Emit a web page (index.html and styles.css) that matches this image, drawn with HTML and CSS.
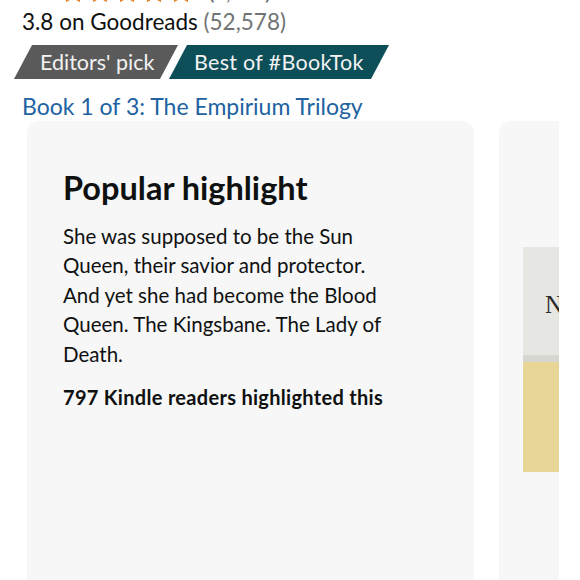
FILE: index.html
```html
<!DOCTYPE html>
<html lang="en">
<head>
<meta charset="utf-8">
<title>Book details</title>
<link rel="stylesheet" href="styles.css">
</head>
<body>
<div class="page">
  <div class="rating-row">
    <svg class="stars" width="132" height="24" viewBox="0 0 132 24" aria-hidden="true">
      <defs>
        <path id="star" d="M12 1.5l3.1 6.9 7.4.7-5.6 5 1.7 7.4L12 17.6l-6.6 3.9 1.7-7.4-5.6-5 7.4-.7z"/>
      </defs>
      <use href="#star" x="0" class="st"/>
      <use href="#star" x="27" class="st"/>
      <use href="#star" x="54" class="st"/>
      <use href="#star" x="81" class="st"/>
      <use href="#star" x="108" class="st"/>
    </svg>
    <span class="count">(4,190)</span>
  </div>
  <div class="goodreads">3.8 on Goodreads <span class="muted">(52,578)</span></div>
  <div class="tags">
    <span class="tag tag-gray">Editors' pick</span>
    <span class="tag tag-teal">Best of #BookTok</span>
  </div>
  <a class="series" href="#">Book 1 of 3: The Empirium Trilogy</a>
  <div class="cards">
    <section class="card">
      <h2 class="card-title">Popular highlight</h2>
      <p class="quote">She was supposed to be the Sun<br>Queen, their savior and protector.<br>And yet she had become the Blood<br>Queen. The Kingsbane. The Lady of<br>Death.</p>
      <p class="readers">797 Kindle readers highlighted this</p>
    </section>
    <section class="card card-next">
      <div class="cover">
        <div class="cover-top"><span class="cover-letter">N</span></div>
        <div class="cover-band"></div>
        <div class="cover-bottom"></div>
      </div>
    </section>
  </div>
</div>
</body>
</html>
```

FILE: styles.css
```css
html, body {
  margin: 0;
  padding: 0;
  background: #ffffff;
}

body {
  font-family: Lato, "Noto Sans", sans-serif;
  color: #0f1111;
}

.page {
  width: 559px;
  height: 580px;
  overflow: hidden;
  padding-left: 22px;
  box-sizing: border-box;
}

.rating-row {
  display: flex;
  align-items: flex-end;
  height: 24px;
  margin-top: -20px;
  padding-left: 39px;
  gap: 16px;
}

.stars {
  display: block;
}

.st {
  fill: #ffa41c;
  stroke: #de7921;
  stroke-width: 1;
}

.count {
  font-size: 20px;
  line-height: 20px;
  color: #565959;
  position: relative;
  top: -2px;
}

.goodreads {
  font-size: 22.5px;
  line-height: 26px;
  margin-top: 5px;
}

.muted {
  color: #6f7373;
}

.tags {
  display: flex;
  margin-top: 10px;
  margin-left: -8px;
}

.tag {
  display: block;
  height: 34px;
  line-height: 34px;
  font-size: 21.5px;
  color: #f2f2f2;
  clip-path: polygon(18px 0, 100% 0, calc(100% - 18px) 100%, 0 100%);
}

.tag-gray {
  background: #5a5a5a;
  width: 164px;
  padding-left: 26px;
  box-sizing: border-box;
}

.tag-teal {
  background: #0c4f59;
  width: 220px;
  padding-left: 25px;
  box-sizing: border-box;
  margin-left: -9px;
  letter-spacing: 0.3px;
}

.series {
  display: block;
  margin-top: 12px;
  font-size: 23px;
  line-height: 30px;
  color: #2162a1;
  text-decoration: none;
}

.cards {
  display: flex;
  gap: 25px;
  margin-top: 0;
  margin-left: 5px;
}

.card {
  flex: 0 0 auto;
  width: 447px;
  height: 500px;
  background: #f7f7f7;
  border-radius: 12px;
  padding: 50px 36px 0;
  box-sizing: border-box;
}

.card-title {
  margin: 0;
  font-size: 32.5px;
  line-height: 34px;
  font-weight: 700;
  color: #0f1111;
}

.quote {
  margin: 17px 0 0;
  font-size: 20.5px;
  line-height: 29.4px;
  color: #0f1111;
}

.readers {
  margin: 16px 0 0;
  font-size: 20px;
  line-height: 24px;
  font-weight: 700;
  letter-spacing: 0.3px;
  color: #0f1111;
}

.card-next {
  width: 200px;
  padding: 126px 0 0 24px;
}

.cover {
  width: 160px;
  height: 225px;
  display: flex;
  flex-direction: column;
}

.cover-top {
  height: 108px;
  background: #e6e6e2;
  padding: 45px 0 0 22px;
  box-sizing: border-box;
}

.cover-letter {
  font-family: "Liberation Serif", serif;
  font-size: 25px;
  line-height: 25px;
  color: #2b2b2b;
}

.cover-band {
  height: 7px;
  background: #d7d7d2;
}

.cover-bottom {
  flex: 1;
  background: #e8d697;
}
```
